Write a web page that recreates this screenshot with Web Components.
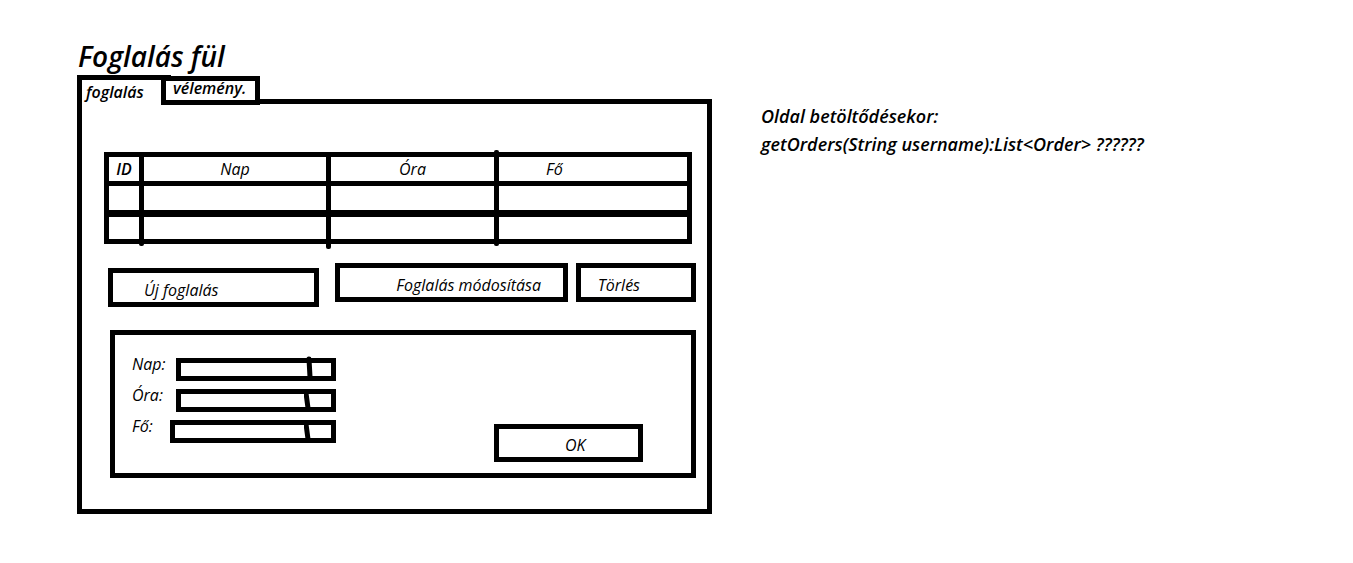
<!DOCTYPE html>
<html lang="hu">
<head>
<meta charset="utf-8">
<meta name="viewport" content="width=device-width, initial-scale=1">
<title>Foglalás fül</title>
<style>
  body {
    margin: 0;
    background: #fff;
    color: #000;
    font: italic 400 16px/20px "Segoe Print", "Open Sans", sans-serif;
  }
</style>
</head>
<body>
<booking-page></booking-page>

<script>
const define = (name, html, setup) => {
  const template = document.createElement('template');
  template.innerHTML = html;
  customElements.define(name, class extends HTMLElement {
    constructor() {
      super();
      this.attachShadow({ mode: 'open' }).append(template.content.cloneNode(true));
    }
    connectedCallback() {
      if (setup) setup(this, this.shadowRoot);
    }
  });
};

/* Thick-outlined push button; --indent places its caption from the left. */
define('sketch-button', `
  <style>
    :host { display: block; height: 39px; }
    button {
      box-sizing: border-box;
      width: 100%;
      height: 100%;
      margin: 0;
      padding: 4px 0 0 var(--indent, 16px);
      border: 5px solid #000;
      border-radius: 0;
      background: #fff;
      color: inherit;
      font: inherit;
      text-align: left;
      white-space: nowrap;
    }
  </style>
  <button type="button"><slot></slot></button>
`);

/* Labelled drop-down with a pen stroke in front of the arrow area. */
define('sketch-select', `
  <style>
    :host { display: grid; grid-template-columns: 44px 1fr; height: 23px; }
    :host([wide]) { grid-template-columns: 38px 1fr; }
    label { line-height: 12px; white-space: nowrap; }
    .box { position: relative; }
    select {
      appearance: none;
      display: block;
      box-sizing: border-box;
      width: 100%;
      height: 100%;
      margin: 0;
      padding: 0 32px 0 4px;
      border: 5px solid #000;
      border-radius: 0;
      background: #fff;
      color: inherit;
      font: inherit;
      line-height: 12px;
    }
    svg { position: absolute; right: 20px; bottom: 0; width: 12px; height: 25px; pointer-events: none; }
    path { fill: none; stroke: #000; stroke-width: 5; stroke-linecap: round; stroke-linejoin: round; }
  </style>
  <label for="field"></label>
  <div class="box">
    <select id="field"><option></option></select>
    <svg viewBox="0 0 12 25" aria-hidden="true"><path/></svg>
  </div>
`, (host, root) => {
  root.querySelector('label').textContent = host.getAttribute('label');
  root.querySelector('path').setAttribute('d',
    host.hasAttribute('tall') ? 'M5 3L6 21' : 'M2 6L4 21');
});

/* Tab strip on top of a framed panel. */
define('sketch-tabs', `
  <style>
    :host { display: block; }
    .tabs { display: flex; height: 30px; margin-bottom: -6px; position: relative; }
    button {
      box-sizing: border-box;
      height: 29px;
      margin: 0;
      border: 5px solid #000;
      border-radius: 0;
      background: #fff;
      color: inherit;
      font: inherit;
      font-weight: 600;
      text-align: left;
      white-space: nowrap;
    }
    .first { width: 94px; padding: 0 0 0 4px; border-width: 5px 0 0 5px; }
    .second { width: 99px; padding: 0 0 5px 7px; margin-left: -10px; align-self: flex-end; line-height: 14px; }
    .panel { border: 5px solid #000; }
  </style>
  <div class="tabs" role="tablist">
    <button class="first" type="button" role="tab" aria-selected="true">foglalás</button>
    <button class="second" type="button" role="tab" aria-selected="false">vélemény.</button>
  </div>
  <div class="panel" role="tabpanel"><slot></slot></div>
`);

/* Orders table; its column rules run slightly past the frame. */
define('orders-table', `
  <style>
    :host { display: block; }
    table {
      width: 100%;
      table-layout: fixed;
      border-collapse: separate;
      border-spacing: 0;
      border: solid #000;
      border-width: 0 5px 5px 0;
    }
    th, td {
      position: relative;
      box-sizing: border-box;
      height: 29px;
      padding: 0;
      border: solid #000;
      border-width: 5px 0 0 5px;
      font-weight: 400;
      line-height: 20px;
    }
    tr:last-child td { border-top-width: 7px; }
    .id { width: 35px; font-weight: 600; }
    .day { width: 187px; }
    .hour { width: 168px; }
    .people { padding-left: 47px; text-align: left; }
    .people::before, tr:last-child td:not(:first-child)::before {
      content: "";
      position: absolute;
      left: -5px;
      top: -7px;
      bottom: 0;
      width: 5px;
      border-radius: 2px;
      background: #000;
    }
    tbody tr:last-child td:not(:first-child)::before { bottom: -7px; }
    tbody tr:last-child td:nth-child(3)::before { bottom: -10px; }
  </style>
  <table>
    <thead>
      <tr><th class="id" scope="col">ID</th><th class="day" scope="col">Nap</th><th class="hour" scope="col">Óra</th><th class="people" scope="col">Fő</th></tr>
    </thead>
    <tbody>
      <tr><td></td><td></td><td></td><td></td></tr>
      <tr><td></td><td></td><td></td><td></td></tr>
    </tbody>
  </table>
`);

define('booking-form', `
  <style>
    :host { display: block; }
    form {
      display: flex;
      justify-content: space-between;
      box-sizing: border-box;
      min-height: 148px;
      padding: 23px 48px 11px 17px;
      border: 5px solid #000;
    }
    .fields { display: grid; align-content: start; gap: 8px; width: 204px; }
    sketch-button { --indent: 66px; align-self: flex-end; width: 149px; height: 38px; }
  </style>
  <form>
    <div class="fields">
      <sketch-select label="Nap:" tall></sketch-select>
      <sketch-select label="Óra:"></sketch-select>
      <sketch-select label="Fő:" wide></sketch-select>
    </div>
    <sketch-button>OK</sketch-button>
  </form>
`);

define('booking-page', `
  <style>
    :host { display: block; }
    main {
      display: grid;
      grid-template-columns: minmax(0, 635px) minmax(0, 1fr);
      column-gap: 49px;
      padding: 38px 77px 48px;
    }
    h1 { margin: 0; padding-left: 1px; font-size: 28px; font-weight: 600; line-height: 37px; }
    orders-table { padding: 48px 15px 0 22px; }
    .actions {
      display: grid;
      grid-template-columns: 211fr 240fr 120fr;
      column-gap: 8px;
      height: 44px;
      padding: 19px 11px 0 26px;
    }
    .new { --indent: 31px; align-self: end; }
    .edit { --indent: 56px; margin-left: 8px; }
    .delete { --indent: 17px; }
    booking-form { padding: 23px 11px 31px 28px; }
    aside { padding-top: 64px; font-size: 18px; font-weight: 600; line-height: 28px; }
    p { margin: 0; }
  </style>
  <main>
    <section>
      <h1>Foglalás fül</h1>
      <sketch-tabs>
        <orders-table></orders-table>
        <div class="actions">
          <sketch-button class="new">Új foglalás</sketch-button>
          <sketch-button class="edit">Foglalás módosítása</sketch-button>
          <sketch-button class="delete">Törlés</sketch-button>
        </div>
        <booking-form></booking-form>
      </sketch-tabs>
    </section>
    <aside>
      <p>Oldal betöltődésekor:</p>
      <p>getOrders(String username):List&lt;Order&gt; ??????</p>
    </aside>
  </main>
`);
</script>
</body>
</html>
